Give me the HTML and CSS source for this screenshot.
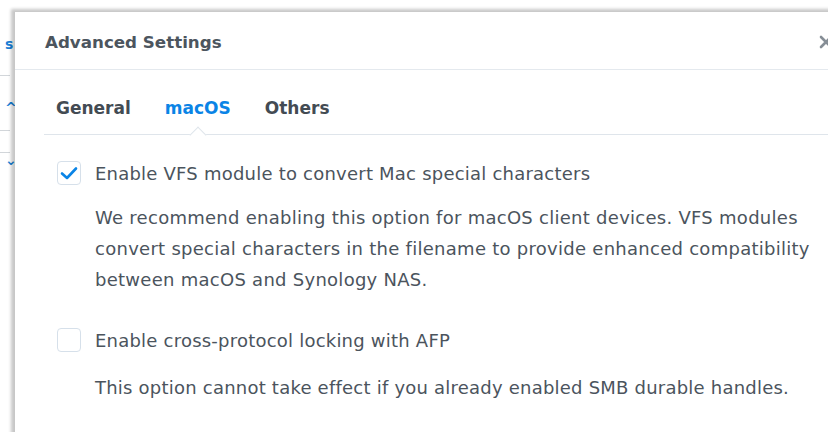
FILE: index.html
```html
<!DOCTYPE html>
<html lang="en">
<head>
<meta charset="utf-8">
<title>Advanced Settings</title>
<link rel="stylesheet" href="styles.css">
</head>
<body>
<div class="backdrop">
  <span class="bg-glyph g1">s</span>
  <span class="bg-rule r1"></span>
  <span class="bg-glyph g2">^</span>
  <span class="bg-rule r2"></span>
  <span class="bg-rule r3"></span>
  <span class="bg-glyph g3">&#8964;</span>
</div>

<div class="dialog">
  <div class="dialog-header">
    <span class="dialog-title">Advanced Settings</span>
    <svg class="close" width="14" height="14" viewBox="0 0 14 14">
      <path d="M2 2 L12 12 M12 2 L2 12" stroke="#868e96" stroke-width="2.6" stroke-linecap="round" fill="none"/>
    </svg>
  </div>
  <div class="dialog-body">
    <div class="tabs">
      <span class="tab">General</span>
      <span class="tab active">macOS</span>
      <span class="tab">Others</span>
    </div>
    <div class="options">
      <label class="option">
        <span class="check checked">
          <svg width="20" height="16" viewBox="0 0 20 16">
            <path d="M3 8.5 L8 13 L17 3.5" stroke="#0a84e6" stroke-width="2.6" stroke-linecap="round" stroke-linejoin="round" fill="none"/>
          </svg>
        </span>
        <span class="option-label">Enable VFS module to convert Mac special characters</span>
      </label>
      <p class="desc">We recommend enabling this option for macOS client devices. VFS modules convert special characters in the filename to provide enhanced compatibility between macOS and Synology NAS.</p>
      <label class="option second">
        <span class="check"></span>
        <span class="option-label">Enable cross-protocol locking with AFP</span>
      </label>
      <p class="desc last">This option cannot take effect if you already enabled SMB durable handles.</p>
    </div>
  </div>
</div>
</body>
</html>
```

FILE: styles.css
```css
html, body {
  margin: 0;
  padding: 0;
  width: 828px;
  height: 432px;
  overflow: hidden;
  background: #ffffff;
  font-family: "DejaVu Sans", Verdana, sans-serif;
}

/* window behind the dialog, only its left sliver shows */
.backdrop {
  position: absolute;
  left: 0;
  top: 0;
  width: 12px;
  height: 432px;
}
.bg-glyph {
  position: absolute;
  left: 5px;
  color: #1a7fd6;
  font-size: 14px;
  font-weight: bold;
}
.g1 { top: 36px; }
.g2 { top: 100px; }
.g3 { top: 152px; }
.bg-rule {
  position: absolute;
  left: 0;
  width: 10px;
  height: 1px;
  background: #d2d6da;
}
.r1 { top: 75px; }
.r2 { top: 130px; }
.r3 { top: 152px; }

.dialog {
  position: absolute;
  left: 15px;
  top: 12px;
  width: 830px;
  height: 440px;
  background: #ffffff;
  box-shadow: -2px -1px 3px 2px rgba(0, 0, 0, 0.22);
}

.dialog-header {
  height: 57px;
  display: flex;
  align-items: center;
  padding-left: 30px;
  border-bottom: 1px solid #e4e9ee;
  position: relative;
}
.dialog-title {
  font-size: 16.7px;
  font-weight: bold;
  color: #4c555e;
  margin-top: 2px;
}
.close {
  position: absolute;
  left: 804px;
  top: 23px;
}

.dialog-body {
  padding-left: 29px;
}

.tabs {
  display: flex;
  height: 64px;
  align-items: flex-end;
  border-bottom: 1px solid #dfe5eb;
}
.tab {
  font-size: 17px;
  font-weight: bold;
  color: #434b53;
  padding: 0 12px 16px;
  margin-right: 10px;
  position: relative;
  line-height: 20px;
}
.tab.active {
  color: #0a84e6;
}
/* little notch pointing up into the active tab */
.tab.active::after {
  content: "";
  position: absolute;
  left: 50%;
  bottom: -7px;
  width: 11px;
  height: 11px;
  margin-left: -6px;
  background: #ffffff;
  border-left: 1px solid #dfe5eb;
  border-top: 1px solid #dfe5eb;
  transform: rotate(45deg);
}

.options {
  padding-left: 13px;
  padding-top: 26px;
}

.option {
  display: flex;
  align-items: center;
  height: 24px;
}
.option.second {
  margin-top: 33px;
}
.check {
  width: 22px;
  height: 22px;
  border: 1px solid #d6e0ea;
  border-radius: 4px;
  display: flex;
  align-items: center;
  justify-content: center;
  flex: none;
}
.option-label {
  margin-left: 14px;
  font-size: 18px;
  letter-spacing: 0.22px;
  color: #4b545d;
}

.desc {
  margin: 17px 0 0 38px;
  font-size: 18px;
  letter-spacing: 0.27px;
  line-height: 31px;
  color: #4b545d;
  width: 720px;
}
.desc.last {
  margin-top: 20px;
  letter-spacing: 0.22px;
}
```
